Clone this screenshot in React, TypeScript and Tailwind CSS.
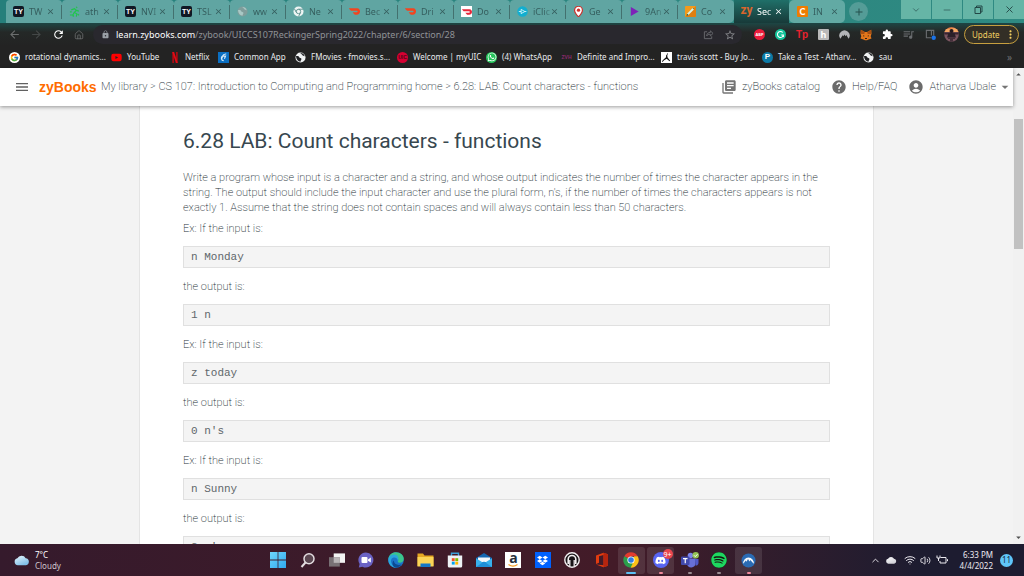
import type { ReactNode } from "react";
import {
  MdMenu, MdLibraryBooks, MdHelp, MdAccountCircle, MdArrowDropDown, MdArrowDropUp,
  MdArrowBack, MdArrowForward, MdRefresh, MdExtension, MdQueueMusic, MdStarBorder,
  MdLock, MdClose, MdAdd, MdMoreVert,
} from "react-icons/md";
import { FcGoogle } from "react-icons/fc";
import { FaWhatsapp, FaYoutube, FaDiscord, FaSpotify, FaDropbox, FaAmazon } from "react-icons/fa";
import { SiDoordash } from "react-icons/si";
import { Wifi, Volume2, ChevronUp, ChevronDown, Minus, House, X } from "lucide-react";

/* ---------- small drawings ---------- */

const TyIcon = () => (
  <span className="flex size-[11px] items-center justify-center rounded-[2px] bg-[#101824] font-['Liberation_Sans'] text-[7px] leading-none font-bold text-white">TY</span>
);

const Runner = () => (
  <svg viewBox="0 0 12 12" className="size-[11px] shrink-0" fill="none" stroke="#1fc64a" strokeWidth="1.300">
    <path d="M8 .8l.8 1.400M2.500 4.200L6 3l2 1.800L5.800 7l2.700 1.500L8 11.500M5.500 7.500L4.200 9.800H1M8 4.800l2.800.8M1 6.500h2M4 11.300l1.500-.8M9.500 9l1.500 1" />
  </svg>
);

const Globe = ({ muted = false }: { muted?: boolean }) => (
  <svg viewBox="0 0 12 12" className="size-[11px] shrink-0">
    <circle cx="6" cy="6" r="5.500" fill={muted ? "#7f9d9b" : "#f1f3f4"} />
    <path d="M1 4.500c2-.6 3.200 0 3.600 1.200.4 1 2 .5 2.400 1.600.3 1-.8 1.500-1 3.200C3.500 10.500 1.500 8 1 4.500zM6 1.200c.2 1.300 1.600 1 2 2.200.3.900 1.600.9 2.600 1.200C10 2.400 8.200 1.200 6 1.200z" fill={muted ? "#a9c8c5" : "#202124"} />
  </svg>
);

const ChromeMono = () => (
  <svg viewBox="0 0 12 12" className="size-[11px] shrink-0">
    <circle cx="6" cy="6" r="5.500" fill="#eef5f4" />
    <circle cx="6" cy="6" r="2.400" fill="none" stroke="#5b8f8d" />
    <path d="M6 3.500h5M3.800 7.200L1.600 3.200M8.200 7.300L6 11.400" stroke="#5b8f8d" fill="none" />
  </svg>
);

const DashIcon = () => <SiDoordash className="size-[11px] shrink-0 text-[#f4441f]" />;
const DashBoxed = () => (
  <span className="flex size-[11px] shrink-0 items-center justify-center bg-white"><SiDoordash className="size-[10px] text-[#e8273a]" /></span>
);

const IClicker = () => (
  <svg viewBox="0 0 12 12" className="size-[11px] shrink-0">
    <circle cx="6" cy="6" r="5.700" fill="#12aed0" />
    <path d="M4.500 3.700v4.600L8.600 6zM2 6h2.500M8.600 6h1.600" fill="none" stroke="#e4fbff" strokeWidth=".9" />
  </svg>
);

const Pin = () => (
  <svg viewBox="0 0 12 12" className="size-[11px] shrink-0">
    <path d="M6 .3a4.300 4.300 0 0 0-4.300 4.300C1.700 7.500 6 11.800 6 11.800s4.300-4.300 4.300-7.200A4.300 4.300 0 0 0 6 .3z" fill="#fff" stroke="#c9302c" strokeWidth="1.300" />
    <circle cx="6" cy="4.600" r="1.800" fill="#cf2f2b" />
  </svg>
);

const Pencil = () => (
  <svg viewBox="0 0 12 12" className="size-[11px] shrink-0">
    <rect width="12" height="12" rx="1" fill="#f39a1c" />
    <path d="M0 12L12 0v11a1 1 0 0 1-1 1z" fill="#e07f10" />
    <path d="M3 9.200L9 3" stroke="#d8f2e2" strokeWidth="2" />
    <path d="M2 10.200l1.400-.5-.9-.9zM8.600 2.200l1.200 1.200" stroke="#2f7d6b" strokeWidth=".8" />
  </svg>
);

const ZyIcon = () => <span className="flex h-[15px] w-[11px] justify-center font-['Roboto'] text-[12px] leading-[13px] font-bold text-[#d9662c]">zy</span>;

const CheggIcon = () => (
  <span className="flex size-[11px] items-center justify-center rounded-[1px] bg-[#f07c00] font-['Lato'] text-[9px] leading-none font-black text-white">C</span>
);

const NetflixN = () => (
  <svg viewBox="0 0 8 12" className="h-[11px] w-[8px]">
    <path d="M1 0h2v12H1zM5 0h2v12H5z" fill="#a80d14" />
    <path d="M1 0h2l4 12H5z" fill="#e50914" />
  </svg>
);

const CommonAppIcon = () => (
  <svg viewBox="0 0 12 12" className="size-[11px]">
    <rect width="12" height="12" fill="#0b6fc2" />
    <path d="M9 2.200C7 2 5.500 2.800 5 4.500a2.700 2.700 0 0 0 1.200 5M5 4.500h3.200L7 7.300" fill="none" stroke="#d5e9f8" strokeWidth="1.300" />
    <circle cx="4.300" cy="6.200" r="1" fill="#d5e9f8" />
  </svg>
);

const UicIcon = () => (
  <span className="flex size-[11px] items-center justify-center rounded-full bg-[#d50032] font-['Liberation_Sans'] text-[5px] leading-none font-bold text-[#4a0716]">UIC</span>
);

const WhatsAppIcon = () => (
  <span className="flex size-[11px] items-center justify-center rounded-full bg-[#25c55b]"><FaWhatsapp className="size-[10px] text-white" /></span>
);

const ZyDark = () => <span className="w-[11px] text-center font-['Liberation_Sans'] text-[5px] leading-none font-bold text-[#8d2a6c]">ZVH</span>;

const Jumpman = () => (
  <svg viewBox="0 0 12 12" className="size-[11px]">
    <rect width="12" height="12" fill="#fff" />
    <path d="M6.800 1l.6 1-.6 2 .4 2 2.800 3.500-.7.500L6.200 7.400 3.400 9 1.600 10.800l-.6-.6L3 8l2.500-2.200L5.500 3.800 6.300 3z" fill="#111" />
  </svg>
);

const Pearson = () => (
  <span className="flex size-[11px] items-center justify-center rounded-full bg-[#0c7aa6] font-['Liberation_Sans'] text-[8px] leading-none font-bold text-white">P</span>
);

const MetaMask = () => (
  <svg viewBox="0 0 12 12" className="size-[12px]">
    <path d="M.8.800l4 2.200h2.400l4-2.200.3 4-.8 2.400.8 2.300-2.900 1-1.600.8H5l-1.600-.8-2.900-1 .8-2.300L.5 4.800z" fill="#e2761b" />
    <path d="M.8.800l4 2.200-.5 2L.9 5zM11.200.8l-4 2.200.5 2 3.400 0z" fill="#a84f12" />
    <path d="M3 6.200l1.800.9-1.500.5zM9 6.200l-1.800.9 1.500.5zM5 9h2v1H5z" fill="#2b2018" />
  </svg>
);

const Avatar = () => (
  <svg viewBox="0 0 15 15" className="size-[15px]">
    <defs><clipPath id="avatar"><circle cx="7.500" cy="7.500" r="7.300" /></clipPath></defs>
    <g clipPath="url(#avatar)">
      <rect width="15" height="15" fill="#7b5560" />
      <rect width="15" height="5" fill="#e9823f" />
      <path d="M0 3c3-2 5 0 7-1s5-1 8 1v2H0z" fill="#f3a765" />
      <path d="M0 5.500h15v2H0z" fill="#3a2630" />
      <circle cx="7.500" cy="4" r="2" fill="#241a20" />
      <path d="M4.500 6h6l1.500 4.500H3z" fill="#2c2029" />
      <path d="M4 10.500h7v1.500H4zM6 12v3h3v-3z" fill="#45303b" />
    </g>
  </svg>
);

/* ---------- browser chrome ---------- */

type Tab = { title: string; icon: ReactNode };

const tabs: Tab[] = [
  { title: "TW", icon: <TyIcon /> },
  { title: "ath", icon: <Runner /> },
  { title: "NVI", icon: <TyIcon /> },
  { title: "TSL", icon: <TyIcon /> },
  { title: "ww", icon: <Globe muted /> },
  { title: "Ne", icon: <ChromeMono /> },
  { title: "Bec", icon: <DashIcon /> },
  { title: "Dri", icon: <DashIcon /> },
  { title: "Do", icon: <DashBoxed /> },
  { title: "iClic", icon: <IClicker /> },
  { title: "Ge", icon: <Pin /> },
  { title: "9An", icon: <svg viewBox="0 0 11 12" className="size-[11px] shrink-0"><path d="M1.500 1.200v9.600L10 6z" fill="#7d22b8" /></svg> },
  { title: "Co", icon: <Pencil /> },
];

function TabContent({ title, icon }: Tab) {
  return (
    <>
      {icon}
      <button className="ml-[5px] w-[17px] mask-r-from-60% mask-r-to-120% text-left text-[9px] whitespace-nowrap">{title}</button>
      <button aria-label={`Close ${title}`} className="text-current"><MdClose className="size-[9px]" /></button>
    </>
  );
}

function TabStrip() {
  return (
    <div className="flex h-[23px] shrink-0 items-center bg-linear-to-r from-[#257f7b] to-[#2f8a82] pl-[6px]">
      {tabs.map((t, i) => (
        <div key={t.title} className={`flex h-full w-14 items-center rounded-t-[4px] bg-[#60a5a2] pl-[7px] text-[#355e5e] ${i === 12 ? "rounded-br-[5px]" : ""}`}>
          <TabContent {...t} />
          {i < 12 && <span className="ml-auto h-[14px] w-px bg-[#43716f]" />}
        </div>
      ))}
      <div className="flex h-full w-[55px] items-center bg-linear-to-b from-[#1f7069] to-[#173a39] pl-[7px] text-white">
        <TabContent title="Sec" icon={<ZyIcon />} />
      </div>
      <div className="flex h-full w-14 items-center rounded-[5px] bg-[#62aaa4] pl-2 text-[#355e5e]">
        <TabContent title="IN" icon={<CheggIcon />} />
      </div>
      <button aria-label="New tab" className="ml-1 flex size-[19px] shrink-0 items-center justify-center rounded-full bg-[#549c97] text-[#24504f]"><MdAdd className="size-[12px]" /></button>
      <div className="ml-auto flex gap-px self-start text-[#234746]">
        <button aria-label="Search tabs" className="flex h-[19px] w-[30px] items-center justify-center bg-[#66b5a6]"><ChevronDown className="size-[10px]" strokeWidth={1.5} /></button>
        <button aria-label="Minimize" className="flex h-[19px] w-[30px] items-center justify-center bg-[#66b5a6]"><Minus className="size-[10px]" strokeWidth={1.5} /></button>
        <button aria-label="Restore" className="flex h-[19px] w-[30px] items-center justify-center bg-[#66b5a6]">
          <svg viewBox="0 0 9 9" className="size-[9px]" fill="none" stroke="currentColor"><path d="M1 2.500h5.500V8.500H1zM2.500 2.500V1H8v6H6.500" /></svg>
        </button>
        <button aria-label="Close" className="flex h-[19px] w-[30px] items-center justify-center bg-[#66b5a6]"><X className="size-[11px]" strokeWidth={2} /></button>
      </div>
    </div>
  );
}

function Toolbar() {
  return (
    <div className="flex h-[23px] shrink-0 items-center bg-linear-to-b from-[#1c4644] via-[#242827] via-40% to-[#232323]">
      <div className="flex items-center gap-[9px] pl-2 text-[#6b6e6e]">
        <button aria-label="Back"><MdArrowBack className="size-[13px]" /></button>
        <button aria-label="Forward" className="text-[#444848]"><MdArrowForward className="size-[13px]" /></button>
        <button aria-label="Reload" className="text-white"><MdRefresh className="size-[13px]" /></button>
        <button aria-label="Home"><House className="size-[10px]" /></button>
      </div>
      <div className="ml-[9px] flex h-[19px] min-w-0 flex-1 items-center rounded-full bg-[#29282e] pr-[6px] pl-2">
        <MdLock className="size-[9px] shrink-0 text-[#9aa0a6]" />
        <p className="ml-[6px] flex-1 truncate text-[9px] text-[#8f9296]"><span className="text-white">learn.zybooks.com</span>/zybook/UICCS107ReckingerSpring2022/chapter/6/section/28</p>
        <button aria-label="Share" className="mr-[10px] text-[#6a6b70]">
          <svg viewBox="0 0 12 12" className="size-[11px]" fill="none" stroke="currentColor"><path d="M4.500 3H1.500v7.500h8V8M4 7.500c.3-2.600 1.600-3.700 4-3.700V2l3 2.800L8 7.500V5.800c-1.800 0-3 .3-4 1.700z" /></svg>
        </button>
        <button aria-label="Bookmark this page" className="text-[#85868a]"><MdStarBorder className="size-[12px]" /></button>
      </div>
      <div className="flex shrink-0 items-center pl-[7px]">
        <button aria-label="Ad blocker" className="flex w-[21px] justify-center"><span className="flex size-[11px] items-center justify-center rounded-full bg-[#ec1c3c] text-[4px] leading-none font-bold text-white">ABP</span></button>
        <button aria-label="Grammarly" className="flex w-[21px] justify-center">
          <svg viewBox="0 0 12 12" className="size-[11px]"><circle cx="6" cy="6" r="6" fill="#15c39a" /><path d="M8.500 3.800A3.300 3.300 0 1 0 9.200 6.500H6.800M9.200 6.500v2.200" fill="none" stroke="#fff" strokeWidth="1.100" /></svg>
        </button>
        <button aria-label="Teleparty" className="w-[22px] text-center font-['Liberation_Sans'] text-[10px] leading-none font-bold text-[#e8222f]">Tp</button>
        <button aria-label="Honey" className="flex w-[21px] justify-center"><span className="flex size-[11px] items-center justify-center rounded-[1px] bg-[#b9b9b9] text-[9px] leading-none font-bold text-white">h</span></button>
        <button aria-label="VPN" className="flex w-[21px] justify-center">
          <svg viewBox="0 0 12 12" className="size-[11px]"><path d="M1.500 10.500a5.600 5.600 0 1 1 9 0L8 6.500 7 8 6 6 4.800 8 4 6.800z" fill="#b3b5b8" /></svg>
        </button>
        <button aria-label="MetaMask" className="flex w-[22px] justify-center"><MetaMask /></button>
        <button aria-label="Extensions" className="flex w-[21px] justify-center text-white"><MdExtension className="size-[11px]" /></button>
        <button aria-label="Media" className="flex w-[21px] justify-center text-[#6a6d70]"><MdQueueMusic className="size-[13px]" /></button>
        <button aria-label="Side panel" className="flex w-[22px] justify-center">
          <svg viewBox="0 0 12 12" className="size-[11px]"><path d="M9.500 7V1.500h-8v8H7M7 2v5" fill="none" stroke="#6a6d70" strokeWidth="1.200" /><circle cx="9.500" cy="9.500" r="2.400" fill="#1a73e8" /></svg>
        </button>
        <button aria-label="Profile" className="flex w-[21px] justify-center"><Avatar /></button>
      </div>
      <button className="mr-[5px] ml-[2px] flex h-[19px] w-[55px] items-center justify-between rounded-full border border-[#c79f3f] bg-[#332f26] pr-px pl-[7px] text-[8px] text-[#f2cf63]">
        Update <MdMoreVert className="size-[13px]" />
      </button>
    </div>
  );
}

function Bookmarks() {
  const items: { label: string; icon: ReactNode; width: string }[] = [
    { label: "rotational dynamics...", icon: <span className="flex size-[11px] items-center justify-center rounded-full bg-white"><FcGoogle className="size-[9px]" /></span>, width: "w-[102px]" },
    { label: "YouTube", icon: <FaYoutube className="size-[11px] text-[#f00]" />, width: "w-[58px]" },
    { label: "Netflix", icon: <span className="flex w-[11px] justify-center"><NetflixN /></span>, width: "w-[49px]" },
    { label: "Common App", icon: <CommonAppIcon />, width: "w-[77px]" },
    { label: "FMovies - fmovies.s...", icon: <Globe />, width: "w-[102px]" },
    { label: "Welcome | myUIC", icon: <UicIcon />, width: "w-[89px]" },
    { label: "(4) WhatsApp", icon: <WhatsAppIcon />, width: "w-[75px]" },
    { label: "Definite and Impro...", icon: <ZyDark />, width: "w-[100px]" },
    { label: "travis scott - Buy Jo...", icon: <Jumpman />, width: "w-[101px]" },
    { label: "Take a Test - Atharv...", icon: <Pearson />, width: "w-[101px]" },
    { label: "sau", icon: <Globe />, width: "w-[50px]" },
  ];
  return (
    <nav aria-label="Bookmarks" className="flex h-[22px] shrink-0 items-center bg-[#232323] pl-[9px] text-[8px] text-[#e8eaed]">
      {items.map((b) => (
        <a key={b.label} href="#" className={`flex shrink-0 items-center gap-[5px] whitespace-nowrap ${b.width}`}>
          {b.icon}{b.label}
        </a>
      ))}
      <button aria-label="More bookmarks" className="mr-3 ml-auto text-[10px] text-[#6c6f72]">»</button>
    </nav>
  );
}

/* ---------- page ---------- */

function Header() {
  return (
    <header className="relative z-10 flex h-[38px] shrink-0 items-center bg-white pl-[14px] text-[11px] font-extralight text-[#263238] shadow-[0_1px_4px_rgba(0,0,0,0.4)]">
      <button aria-label="Menu" className="text-[#616161]"><MdMenu className="size-[16px]" /></button>
      <a href="#" className="ml-[9px] w-[62px] font-['Liberation_Sans'] text-[14px] font-bold text-[#ff6c00]">zyBooks</a>
      <p className="whitespace-nowrap">My library &gt; CS 107: Introduction to Computing and Programming home &gt; 6.28: LAB: Count characters - functions</p>
      <div className="ml-auto flex items-center whitespace-nowrap">
        <a href="#" className="flex items-center gap-[5px]"><MdLibraryBooks className="size-[16px] text-[#757575]" />zyBooks catalog</a>
        <a href="#" className="ml-[11px] flex items-center gap-[5px]"><MdHelp className="size-[16px] text-[#6b6b6b]" />Help/FAQ</a>
        <button className="ml-[11px] flex items-center gap-[5px]"><MdAccountCircle className="size-[16px] text-[#6b6b6b]" />Atharva Ubale<MdArrowDropDown className="-ml-1 size-[16px] text-[#757575]" /></button>
      </div>
    </header>
  );
}

const examples = [
  { input: "n Monday", output: "1 n" },
  { input: "z today", output: "0 n's" },
  { input: "n Sunny", output: "2 n's" },
];

function Sample({ label, code }: { label: string; code: string }) {
  return (
    <div className="mb-[11px]">
      <p className="mb-[10px]">{label}</p>
      <pre className="h-[22px] border border-[#e0e0e0] bg-[#f4f4f4] pl-[7px] font-['Liberation_Mono'] text-[11px] leading-[20px] font-normal text-[#5f676b]">{code}</pre>
    </div>
  );
}

function Lesson() {
  return (
    <main className="flex min-h-0 flex-1 justify-center overflow-hidden bg-[#f3f3f3]">
      <article className="h-fit w-[735px] border-x border-[#e4e4e4] bg-white px-[43px] pt-5 text-[11px] leading-[15px] font-extralight text-[#263238]">
        <h1 className="mb-[14px] text-[21px] leading-[30px] font-normal text-[#37474f]">6.28 LAB: Count characters - functions</h1>
        <p className="mb-[6px]">
          Write a program whose input is a character and a string, and whose output indicates the number of times the character appears in the string. The output should include the input character and use the plural form, n's, if the number of times the characters appears is not exactly 1. Assume that the string does not contain spaces and will always contain less than 50 characters.
        </p>
        {examples.map((e) => (
          <div key={e.input}>
            <Sample label="Ex: If the input is:" code={e.input} />
            <Sample label="the output is:" code={e.output} />
          </div>
        ))}
      </article>
    </main>
  );
}

function Scrollbar() {
  return (
    <div className="flex w-[11px] shrink-0 flex-col items-center bg-[#f1f1f1] text-[#505050]">
      <MdArrowDropUp className="h-[13px] w-[11px]" />
      <div className="mt-[38px] h-[130px] w-[9px] bg-[#c1c1c1]" />
      <MdArrowDropDown className="mt-auto h-[13px] w-[11px]" />
    </div>
  );
}

/* ---------- taskbar ---------- */

const S = "size-[16px]";

const apps: { name: string; icon: ReactNode; on?: boolean; mark?: string }[] = [
  { name: "Start", icon: <svg viewBox="0 0 16 16" className={S}><defs><linearGradient id="win" x2="1" y2="1"><stop stopColor="#6fd6fb" /><stop offset="1" stopColor="#2fa9f0" /></linearGradient></defs><path d="M0 0h7.600v7.600H0zM8.400 0H16v7.600H8.400zM0 8.400h7.600V16H0zM8.400 8.400H16V16H8.400z" fill="url(#win)" /></svg> },
  { name: "Search", icon: <svg viewBox="0 0 16 16" className={S} fill="none" stroke="#e3dde0" strokeWidth="1.500"><circle cx="9" cy="6.800" r="5" fill="#5a4650" /><path d="M5.500 10.500L1.500 15" strokeWidth="2" /></svg> },
  { name: "Task view", icon: <svg viewBox="0 0 17 16" className={S}><path d="M5 1h12v10H5z" fill="#f3f3f3" /><path d="M0 5h11.500v10H0z" fill="#787074" /><path d="M5 5h6.500v6H5z" fill="#b9b4b6" /></svg> },
  { name: "Chat", icon: <svg viewBox="0 0 16 16" className={S}><path d="M8 .5a7.500 7.500 0 1 1-3.500 14.200L.8 15.500l.8-3.500A7.500 7.500 0 0 1 8 .5z" fill="#6a62c4" /><rect x="3.500" y="5" width="6" height="6" rx="1" fill="#fff" /><path d="M10 7.500l2.800-2v5L10 8.800z" fill="#fff" /></svg> },
  { name: "Edge", icon: <svg viewBox="0 0 16 16" className={S}>
      <circle cx="8" cy="8" r="7.800" fill="#1b74c9" />
      <path d="M.3 7C1 2.500 4.300.2 8 .2c4.600 0 7.800 3 7.800 6.500 0 2.800-2 4.100-4 4.100-1.600 0-2.300-.6-2-1.200C11.300 7.200 9 5 6.300 5 3.500 5 1 6 .3 7z" fill="#3bc58c" />
      <path d="M.3 7C1.500 3 5 2 7.600 2.700 10.500 3.600 11 7 9.800 9.300 10 6.500 7.500 5 5.500 5.600 3 6.300 2.500 9 3.300 11c.8 2.600 3.200 4.200 5.200 4.700C3.800 16 0 12.500.3 7z" fill="#2aa6dc" />
      <path d="M5.800 8.500c0 3.500 3.500 5.300 7.700 4-1.500 2-3.800 3.200-6 3C4 14.500 3.800 10 5.800 8.500z" fill="#0c4a92" />
    </svg> },
  { name: "File Explorer", icon: <svg viewBox="0 0 17 16" className="h-[16px] w-[17px]"><path d="M.5 1.500h5.500l1.500 2h9V14H.5z" fill="#e5a823" /><path d="M.5 5h16v9.500H.5z" fill="#fbd457" /><path d="M3.500 11.500h10v3.500h-10z" fill="#1577c6" /></svg> },
  { name: "Store", icon: <svg viewBox="0 0 16 16" className={S}><path d="M4.500 4V1.200h7V4" fill="none" stroke="#3c9fd8" strokeWidth="1.400" /><path d="M.8 3.500h14.400V14a1.500 1.500 0 0 1-1.500 1.500H2.300A1.500 1.500 0 0 1 .8 14z" fill="#eef2f5" /><path d="M4.800 6.200h2.900v2.900H4.800z" fill="#f25022" /><path d="M8.300 6.200h2.900v2.900H8.300z" fill="#7fba00" /><path d="M4.800 9.700h2.900v2.900H4.800z" fill="#00a4ef" /><path d="M8.300 9.700h2.900v2.900H8.300z" fill="#ffb900" /></svg> },
  { name: "Mail", icon: <svg viewBox="0 0 16 16" className={S}><path d="M0 6l8-5 8 5v9H0z" fill="#1467b0" /><path d="M2 5.500h12V10H2z" fill="#f4f8fb" /><path d="M0 6.300l8 5 8-5V15H0z" fill="#38b0ec" /><path d="M0 15l8-5.500L16 15z" fill="#1f8fd8" /></svg> },
  { name: "Amazon", icon: (
    <span className="relative flex size-4 justify-center bg-white font-['Open_Sans'] text-[14px] leading-[12px] font-bold text-[#26303c]">a
      <svg viewBox="0 0 16 4" className="absolute bottom-0 left-0 h-1 w-4" fill="none" stroke="#f79a1f" strokeWidth="1.200"><path d="M3.500.5c3 2.200 6 2.200 9 0" /></svg>
    </span>
  ) },
  { name: "Dropbox", icon: <span className="flex size-4 items-center justify-center bg-[#0061fe] text-white"><FaDropbox className="size-[11px]" /></span> },
  { name: "Headphones", icon: <svg viewBox="0 0 16 16" className={S}><circle cx="8" cy="8" r="7.200" fill="#181417" stroke="#f2eff1" strokeWidth="1.400" /><path d="M4.200 12V7.300a3.800 3.800 0 0 1 7.600 0V12" fill="none" stroke="#f2eff1" strokeWidth="1.600" /><path d="M5.800 8v6M10.200 8v6" stroke="#f2eff1" strokeWidth="1.300" /></svg> },
  { name: "Office", icon: <svg viewBox="0 0 16 16" className={S}><path d="M2 3.500L9.500.8l4.500 1.500v11.400l-4.500 1.500L2 12.500l7.500.8V3L5 4.200v6.500L2 12z" fill="#e23c10" /><path d="M9.500.8l4.500 1.500v11.400l-4.500 1.500z" fill="#b7250f" /></svg> },
  { name: "Chrome", on: true, mark: "w-[10px] bg-[#5cc1f5]", icon: <svg viewBox="0 0 16 16" className={S}>
      <path d="M8 8L1.300 4.200A7.700 7.700 0 0 1 14.700 4.200H8z" fill="#e33b2e" />
      <path d="M8 8l3.400-3.800h3.300A7.700 7.700 0 0 1 7.700 15.700z" fill="#fbc116" />
      <path d="M8 8l1.500 4-2 3.700A7.700 7.700 0 0 1 1.300 4.200z" fill="#2b9f4b" />
      <circle cx="8" cy="8" r="3.600" fill="#fff" /><circle cx="8" cy="8" r="2.800" fill="#2f7de1" />
    </svg> },
  { name: "Discord", on: true, mark: "w-1 bg-[#f0899b]", icon: <span className="relative flex size-4 items-center justify-center rounded-full bg-[#5865f2] text-white"><FaDiscord className="size-[11px]" /><span className="absolute -top-[3px] -right-[4px] flex size-[10px] items-center justify-center rounded-full bg-[#e8464f] text-[7px] leading-none">9+</span></span> },
  { name: "Teams", mark: "w-1 bg-[#9a8c92]", icon: <svg viewBox="0 0 18 16" className="h-[16px] w-[18px]"><circle cx="9.500" cy="3.500" r="2.800" fill="#7b83eb" /><path d="M6 6.500h8.500v5A4.300 4.300 0 0 1 6 12z" fill="#6870d8" /><path d="M14 7h3.500v4a2.500 2.500 0 0 1-3 2.400z" fill="#5059c9" /><rect y="4.500" width="8.500" height="8.500" rx="1" fill="#4149ac" /><path d="M2 6.700h4.500M4.250 6.700v4.500" stroke="#fff" strokeWidth="1.200" /><circle cx="14.700" cy="3.300" r="3.200" fill="#92c353" /><path d="M13 3.300l1.300 1.300 2.200-2.400" fill="none" stroke="#fff" /></svg> },
  { name: "Spotify", mark: "w-1 bg-[#9a8c92]", icon: <span className="rounded-full bg-[#15160f]"><FaSpotify className="size-4 text-[#1ed760]" /></span> },
  { name: "NordVPN", on: true, mark: "w-1 bg-[#f0899b]", icon: <svg viewBox="0 0 16 16" className="size-[15px]"><circle cx="8" cy="8" r="7.500" fill="#2a6cb4" /><path d="M2.500 11.500a5.600 5.600 0 1 1 11 0L10 7.500 9 9 7.500 6.500 5.800 9.200 5 8z" fill="#f5f9fd" /></svg> },
];

const CloudShape = ({ className, from, to }: { className: string; from: string; to: string }) => (
  <svg viewBox="0 0 16 12" className={className}>
    <defs><linearGradient id={`cloud${from.slice(1)}`} x2=".6" y2="1"><stop stopColor={from} /><stop offset="1" stopColor={to} /></linearGradient></defs>
    <path d="M4 11.500A3.700 3.700 0 0 1 3.600 4.200 5 5 0 0 1 12.500 4a3.800 3.800 0 0 1 .3 7.500z" fill={`url(#cloud${from.slice(1)})`} />
  </svg>
);

function Taskbar() {
  return (
    <footer className="flex h-8 shrink-0 items-center bg-linear-to-r from-[#351a2c] via-[#431b28] via-60% to-[#1d1c30] to-90% text-white">
      <button className="flex flex-1 items-center gap-[6px] pl-[14px] text-left text-[8px] leading-[11px]">
        <CloudShape className="h-3 w-[15px]" from="#e9f6fd" to="#7fbfe8" />
        <span className="flex flex-col"><span>7°C</span><span className="text-[#cfc6cb]">Cloudy</span></span>
      </button>
      <div className="grid w-[500px] grid-cols-17">
        {apps.map((a) => (
          <button key={a.name} aria-label={a.name} className={`relative mx-auto flex h-[27px] w-[27px] items-center justify-center rounded-[3px] ${a.on ? "bg-white/10" : ""}`}>
            {a.icon}
            {a.mark && <span className={`absolute bottom-0 h-[2px] rounded-full ${a.mark}`} />}
          </button>
        ))}
      </div>
      <div className="flex flex-1 items-center justify-end pr-[11px] text-[#eceaf0]">
        <button aria-label="Hidden icons"><ChevronUp className="size-[11px]" /></button>
        <CloudShape className="ml-1 h-[8px] w-[12px]" from="#ffffff" to="#d0d0d6" />
        <Wifi className="ml-[7px] size-[12px]" />
        <Volume2 className="ml-1 size-[11px]" />
        <svg viewBox="0 0 12 12" className="ml-[5px] size-[12px]" fill="none" stroke="currentColor"><path d="M4.500 3.500h5.500v5.500H4V7M11.500 5.200v2M1 1.500v2.500h3V1.500M2.500 4v3" /></svg>
        <button className="ml-3 text-right text-[8px] leading-[11px]"><span className="block">6:33 PM</span><span className="block">4/4/2022</span></button>
        <button aria-label="Notifications" className="ml-[7px] flex size-[13px] items-center justify-center rounded-full bg-[#5fc6fa] text-[8px] leading-none text-[#17283a]">11</button>
      </div>
    </footer>
  );
}

export default function App() {
  return (
    <div className="flex h-screen flex-col overflow-hidden font-['Noto_Sans',sans-serif]">
      <div className="shrink-0">
        <TabStrip />
        <Toolbar />
        <Bookmarks />
      </div>
      <div className="flex min-h-0 flex-1 font-['Roboto',sans-serif]">
        <div className="flex min-w-0 flex-1 flex-col">
          <Header />
          <Lesson />
        </div>
        <Scrollbar />
      </div>
      <Taskbar />
    </div>
  );
}
